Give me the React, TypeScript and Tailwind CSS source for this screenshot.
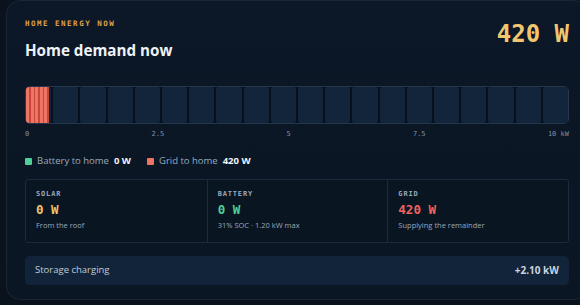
const segments = Array.from({ length: 20 }, (_, i) => i);

const stats = [
  { label: 'SOLAR', value: '0 W', color: 'text-[#f1c36a]', note: 'From the roof' },
  { label: 'BATTERY', value: '0 W', color: 'text-[#4fcf97]', note: '31% SOC · 1.20 kW max' },
  { label: 'GRID', value: '420 W', color: 'text-[#f2625c]', note: 'Supplying the remainder' },
];

const mono = "font-['DejaVu_Sans_Mono','Liberation_Mono',monospace]";

export default function App() {
  return (
    <div className="h-[305px] w-[580px] overflow-hidden bg-[#0a121d] font-['Open_Sans','Noto_Sans',sans-serif]">
      <div className="ml-[6px] h-[300px] w-[582px] rounded-[14px] border border-[#1a2636] bg-[linear-gradient(180deg,#0c1727_0%,#0b1624_100%)] pl-[18px] pr-[18px] pt-[18px]">
        {/* header */}
        <div className="flex items-start justify-between">
          <div>
            <div className={`${mono} text-[7.5px] font-bold leading-[10px] tracking-[0.2em] text-[#e0a24a]`}>HOME ENERGY NOW</div>
            <h1 className="mt-[11px] text-[15.2px] font-bold leading-[20px] text-[#eef2f6]">Home demand now</h1>
          </div>
          <div className={`${mono} mt-[1px] text-[24px] font-bold leading-[28px] text-[#f2c66f]`}>420 W</div>
        </div>

        {/* bar */}
        <div className="mt-[26px] flex h-[38px] gap-[2px] rounded-[5px] border border-[#25374d] bg-[#07101b]">
          {segments.map(i => (
            <div key={i} className="flex-1 rounded-[2px] bg-[#13253a]">
              {i === 0 && (
                <div className="h-full w-[92%] rounded-l-[3px] bg-[repeating-linear-gradient(90deg,#f07463_0_3px,#c4493d_3px_4.6px)]" />
              )}
            </div>
          ))}
        </div>
        <div className={`${mono} mt-[5px] flex justify-between text-[7px] leading-[10px] text-[#7e8ea2]`}>
          <span>0</span>
          <span>2.5</span>
          <span>5</span>
          <span>7.5</span>
          <span>10 kW</span>
        </div>

        {/* legend */}
        <div className="mt-[16px] flex items-center text-[9.5px] leading-[12px]">
          <span className="h-[7px] w-[7px] rounded-[1px] bg-[#4fcf97]" />
          <span className="ml-[5px] text-[#9aa9ba]">Battery to home</span>
          <span className="ml-[5px] font-bold text-[#f1f4f8]">0 W</span>
          <span className="ml-[16px] h-[7px] w-[7px] rounded-[1px] bg-[#f07463]" />
          <span className="ml-[5px] text-[#9aa9ba]">Grid to home</span>
          <span className="ml-[5px] font-bold text-[#f1f4f8]">420 W</span>
        </div>

        {/* stats */}
        <div className="mt-[12px] grid h-[64px] grid-cols-3 rounded-[3px] border border-[#1b2a3c] bg-[#0a1522]">
          {stats.map((s, i) => (
            <div key={s.label} className={`px-[10px] pt-[10px] ${i > 0 ? 'border-l border-[#1b2a3c]' : ''}`}>
              <div className={`${mono} text-[7px] font-bold leading-[9px] tracking-[0.12em] text-[#9aa8b9]`}>{s.label}</div>
              <div className={`${mono} mt-[3px] text-[12.5px] font-bold leading-[15px] ${s.color}`}>{s.value}</div>
              <div className="mt-[3px] text-[7.5px] leading-[11px] text-[#9aa8b9]">{s.note}</div>
            </div>
          ))}
        </div>

        {/* storage */}
        <div className="mt-[13px] flex h-[29px] items-center justify-between rounded-[5px] bg-[#12243a] pl-[10px] pr-[10px]">
          <span className="text-[9.5px] text-[#c3ccd7]">Storage charging</span>
          <span className="text-[10px] font-bold text-[#c9d3de]">+2.10 kW</span>
        </div>
      </div>
    </div>
  );
}
